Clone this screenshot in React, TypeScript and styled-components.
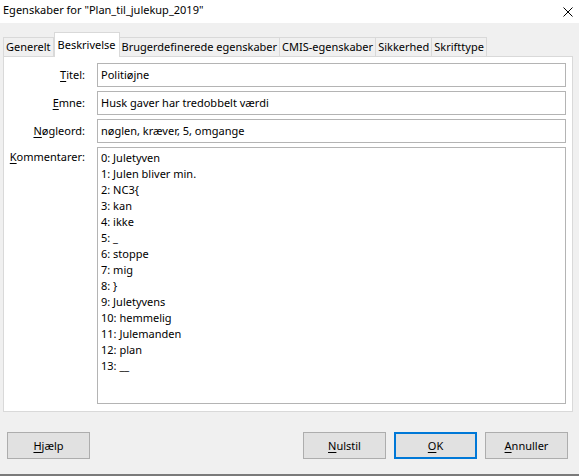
import React from "react";
import styled, { createGlobalStyle } from "styled-components";

const Global = createGlobalStyle`
  html, body { margin: 0; padding: 0; background: #f0f0f0; }
  body { font-family: "Noto Sans", "Open Sans", sans-serif; font-size: 11px; color: #000; }
`;

const Window = styled.div`
  width: 579px;
  height: 476px;
  box-sizing: border-box;
  display: flex;
  flex-direction: column;
  background: #f0f0f0;
  border-bottom: 2px solid #7a7a7a;
`;

const TitleBar = styled.div`
  height: 23px;
  background: #fff;
  display: flex;
  align-items: flex-start;
  justify-content: space-between;
  padding: 2px 6px 0 3px;
  box-sizing: border-box;
  font-size: 11px;
  line-height: 16px;
`;

const CloseIcon = styled.svg`
  width: 10px;
  height: 10px;
  margin-top: 5px;
`;

const TabRow = styled.div`
  height: 34px;
  display: flex;
  align-items: flex-end;
  padding-left: 3px;
  box-sizing: border-box;
  position: relative;
  z-index: 1;
  margin-bottom: -1px;
`;

const Tab = styled.div<{ $active?: boolean }>`
  box-sizing: border-box;
  height: ${(p) => (p.$active ? "25px" : "20px")};
  padding: ${(p) => (p.$active ? "4px 3px 0" : "1px 2px 0")};
  border: 1px solid #d9d9d9;
  border-bottom: ${(p) => (p.$active ? "none" : "1px solid #d9d9d9")};
  border-left: ${(p) => (p.$active ? "1px solid #d9d9d9" : "none")};
  background: ${(p) => (p.$active ? "#fff" : "#f0f0f0")};
  line-height: 16px;
  white-space: nowrap;
  &:first-child { border-left: 1px solid #d9d9d9; }
`;

const Panel = styled.div`
  margin: 0 6px 0 3px;
  height: 356px;
  box-sizing: border-box;
  background: #fff;
  border: 1px solid #d9d9d9;
  padding: 6px 6px 7px 0;
  display: grid;
  grid-template-columns: 81px 1fr;
  grid-template-rows: 24px 24px 24px 1fr;
  column-gap: 12px;
  row-gap: 4px;
`;

const Label = styled.label<{ $top?: boolean }>`
  justify-self: end;
  align-self: ${(p) => (p.$top ? "start" : "center")};
  padding-top: ${(p) => (p.$top ? "2px" : "0")};
  line-height: 16px;
  white-space: nowrap;
`;

const Key = styled.span`
  text-decoration: underline;
  text-underline-offset: 2px;
`;

const Field = styled.div`
  box-sizing: border-box;
  border: 1px solid #b4b4b4;
  background: #fff;
  padding: 0 3px;
  display: flex;
  align-items: center;
  line-height: 16px;
  white-space: nowrap;
`;

const TextArea = styled.div`
  box-sizing: border-box;
  border: 1px solid #b4b4b4;
  background: #fff;
  padding: 2px 3px;
  line-height: 16px;
`;

const Line = styled.div`
  height: 16px;
  white-space: pre;
`;

const Footer = styled.div`
  flex: 1;
  display: flex;
  align-items: flex-start;
  padding: 20px 11px 0 7px;
`;

const Spacer = styled.div`
  flex: 1;
`;

const Button = styled.div<{ $primary?: boolean }>`
  width: 83px;
  height: 27px;
  box-sizing: border-box;
  background: #e1e1e1;
  border: ${(p) => (p.$primary ? "2px solid #0078d7" : "1px solid #adadad")};
  display: flex;
  align-items: center;
  justify-content: center;
  line-height: 16px;
  & + & { margin-left: 8px; }
`;

const comments = [
  "0: Juletyven",
  "1: Julen bliver min.",
  "2: NC3{",
  "3: kan",
  "4: ikke",
  "5: _",
  "6: stoppe",
  "7: mig",
  "8: }",
  "9: Juletyvens",
  "10: hemmelig",
  "11: Julemanden",
  "12: plan",
  "13: __",
];

const tabs = [
  "Generelt",
  "Beskrivelse",
  "Brugerdefinerede egenskaber",
  "CMIS-egenskaber",
  "Sikkerhed",
  "Skrifttype",
];

export default function App() {
  return (
    <>
      <Global />
      <Window>
        <TitleBar>
          <span>Egenskaber for "Plan_til_julekup_2019"</span>
          <CloseIcon viewBox="0 0 10 10">
            <path d="M0.5 0.5 L9.5 9.5 M9.5 0.5 L0.5 9.5" stroke="#000" strokeWidth="1" fill="none" />
          </CloseIcon>
        </TitleBar>
        <TabRow>
          {tabs.map((t) => (
            <Tab key={t} $active={t === "Beskrivelse"}>
              {t}
            </Tab>
          ))}
        </TabRow>
        <Panel>
          <Label>
            <Key>T</Key>itel:
          </Label>
          <Field>Politiøjne</Field>
          <Label>
            <Key>E</Key>mne:
          </Label>
          <Field>Husk gaver har tredobbelt værdi</Field>
          <Label>
            <Key>N</Key>øgleord:
          </Label>
          <Field>nøglen, kræver, 5, omgange</Field>
          <Label $top>
            <Key>K</Key>ommentarer:
          </Label>
          <TextArea>
            {comments.map((c) => (
              <Line key={c}>{c}</Line>
            ))}
          </TextArea>
        </Panel>
        <Footer>
          <Button>
            <span>
              <Key>H</Key>jælp
            </span>
          </Button>
          <Spacer />
          <Button>
            <span>
              <Key>N</Key>ulstil
            </span>
          </Button>
          <Button $primary>
            <span>
              <Key>O</Key>K
            </span>
          </Button>
          <Button>
            <span>
              <Key>A</Key>nnuller
            </span>
          </Button>
        </Footer>
      </Window>
    </>
  );
}
